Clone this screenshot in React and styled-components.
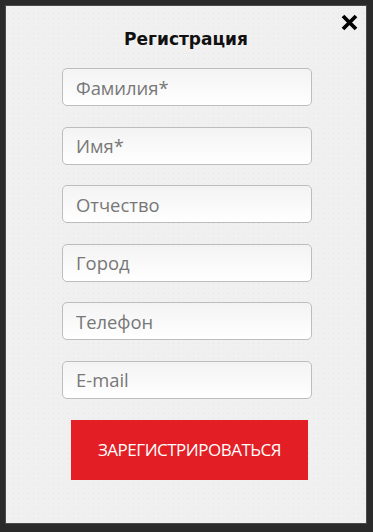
import styled, { createGlobalStyle } from 'styled-components';

const GlobalStyle = createGlobalStyle`
    html, body {
        margin: 0;
        padding: 0;
        background: #2a2a2a;
    }
    * {
        box-sizing: border-box;
    }
`;

const fields = ['Фамилия*', 'Имя*', 'Отчество', 'Город', 'Телефон', 'E-mail'];

function CloseIcon() {
    return (
        <svg width="19" height="19" viewBox="0 0 19 19">
            <path d="M3 3 L16 16 M16 3 L3 16" stroke="#000" strokeWidth="3.8" strokeLinecap="butt" fill="none" />
        </svg>
    );
}

function App() {
    return (
        <>
            <GlobalStyle />
            <Page>
                <Modal>
                    <CloseButton type="button" aria-label="Закрыть">
                        <CloseIcon />
                    </CloseButton>
                    <Title>Регистрация</Title>
                    <Form onSubmit={(e) => e.preventDefault()}>
                        {fields.map((f) => (
                            <Field key={f} placeholder={f} />
                        ))}
                        <Submit type="submit">Зарегистрироваться</Submit>
                    </Form>
                </Modal>
            </Page>
        </>
    );
}

export default App;

const Page = styled.div`
    width: 373px;
    height: 532px;
    padding: 5px 6px 0 5px;
    background: #2a2a2a;
`;
const Modal = styled.div`
    position: relative;
    width: 362px;
    height: 519px;
    border: 1px solid #4a4a4a;
    background-color: #f1f0f0;
    background-image: radial-gradient(rgba(215, 205, 205, 0.3) 0.6px, transparent 0.9px);
    background-size: 5px 5px;
    padding-top: 22px;
`;
const CloseButton = styled.button`
    position: absolute;
    top: 7px;
    right: 7px;
    padding: 0;
    border: 0;
    background: none;
    cursor: pointer;
    display: flex;
`;
const Title = styled.h2`
    margin: 0;
    text-align: center;
    font-family: 'DejaVu Sans', Verdana, sans-serif;
    font-weight: bold;
    font-size: 17px;
    line-height: 22px;
    color: #111;
`;
const Form = styled.form`
    display: flex;
    flex-direction: column;
    align-items: flex-start;
    gap: 20.6px;
    padding-left: 56px;
    margin-top: 18px;
`;
const Field = styled.input`
    width: 250px;
    height: 38px;
    border: 1px solid #bdbdbd;
    border-radius: 5px;
    background: linear-gradient(#f3f3f3, #ffffff);
    padding: 0 13px;
    font-family: 'Open Sans', sans-serif;
    font-size: 18.4px;
    color: #333;
    outline: none;
    &::placeholder {
        color: #777;
    }
`;
const Submit = styled.button`
    margin-left: 9px;
    width: 237px;
    height: 60px;
    border: 0;
    background: #e31e24;
    color: #fff;
    font-family: 'Open Sans', sans-serif;
    font-size: 17px;
    letter-spacing: -0.5px;
    text-transform: uppercase;
    cursor: pointer;
`;
